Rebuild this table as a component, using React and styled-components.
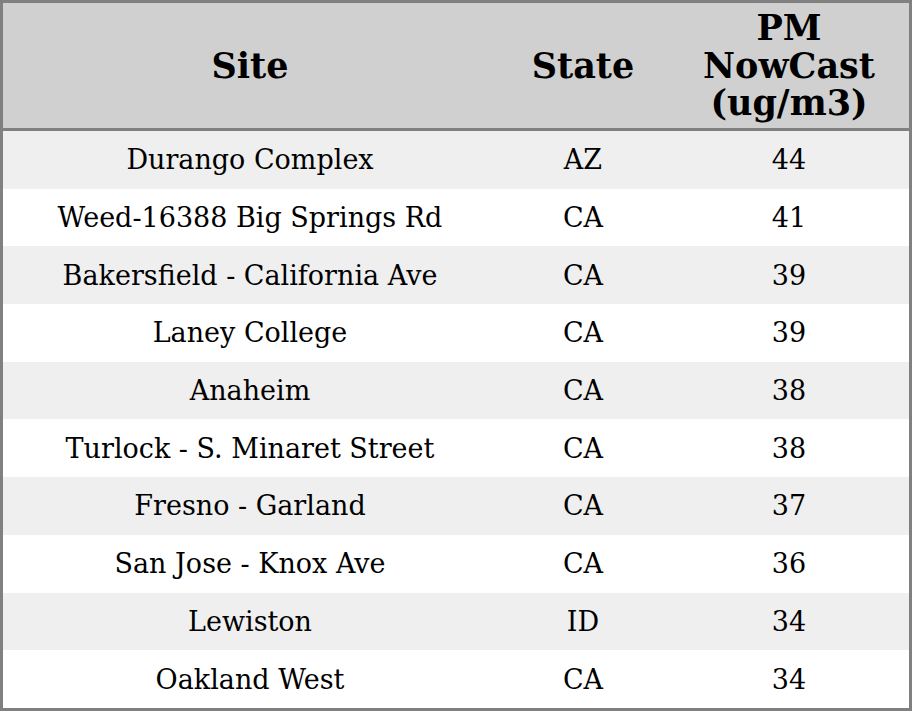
import React from "react";
import styled, { createGlobalStyle } from "styled-components";

const Global = createGlobalStyle`
  html, body {
    margin: 0;
    padding: 0;
    background: #ffffff;
  }
`;

const Table = styled.table`
  width: 912px;
  height: 711px;
  border-collapse: collapse;
  border: 3px solid #808080;
  font-family: "DejaVu Serif", serif;
  color: #000;
  table-layout: fixed;
`;

const HeadCell = styled.th`
  width: ${(p) => p.w}px;
  height: 125px;
  background: #d0d0d0;
  border-bottom: 3px solid #808080;
  font-size: 35px;
  font-weight: bold;
  line-height: 37.5px;
  text-align: center;
  padding: 0;
`;

const Row = styled.tr`
  background: ${(p) => (p.odd ? "#efefef" : "#ffffff")};
`;

const Cell = styled.td`
  font-size: 27px;
  text-align: center;
  padding: 0;
  height: 57px;
`;

const rows = [
  ["Durango Complex", "AZ", 44],
  ["Weed-16388 Big Springs Rd", "CA", 41],
  ["Bakersfield - California Ave", "CA", 39],
  ["Laney College", "CA", 39],
  ["Anaheim", "CA", 38],
  ["Turlock - S. Minaret Street", "CA", 38],
  ["Fresno - Garland", "CA", 37],
  ["San Jose - Knox Ave", "CA", 36],
  ["Lewiston", "ID", 34],
  ["Oakland West", "CA", 34],
];

export default function App() {
  return (
    <>
      <Global />
      <Table>
        <thead>
          <tr>
            <HeadCell w={494}>Site</HeadCell>
            <HeadCell w={172}>State</HeadCell>
            <HeadCell w={240}>
              PM
              <br />
              NowCast
              <br />
              (ug/m3)
            </HeadCell>
          </tr>
        </thead>
        <tbody>
          {rows.map((r, i) => (
            <Row key={i} odd={i % 2 === 0}>
              <Cell>{r[0]}</Cell>
              <Cell>{r[1]}</Cell>
              <Cell>{r[2]}</Cell>
            </Row>
          ))}
        </tbody>
      </Table>
    </>
  );
}
